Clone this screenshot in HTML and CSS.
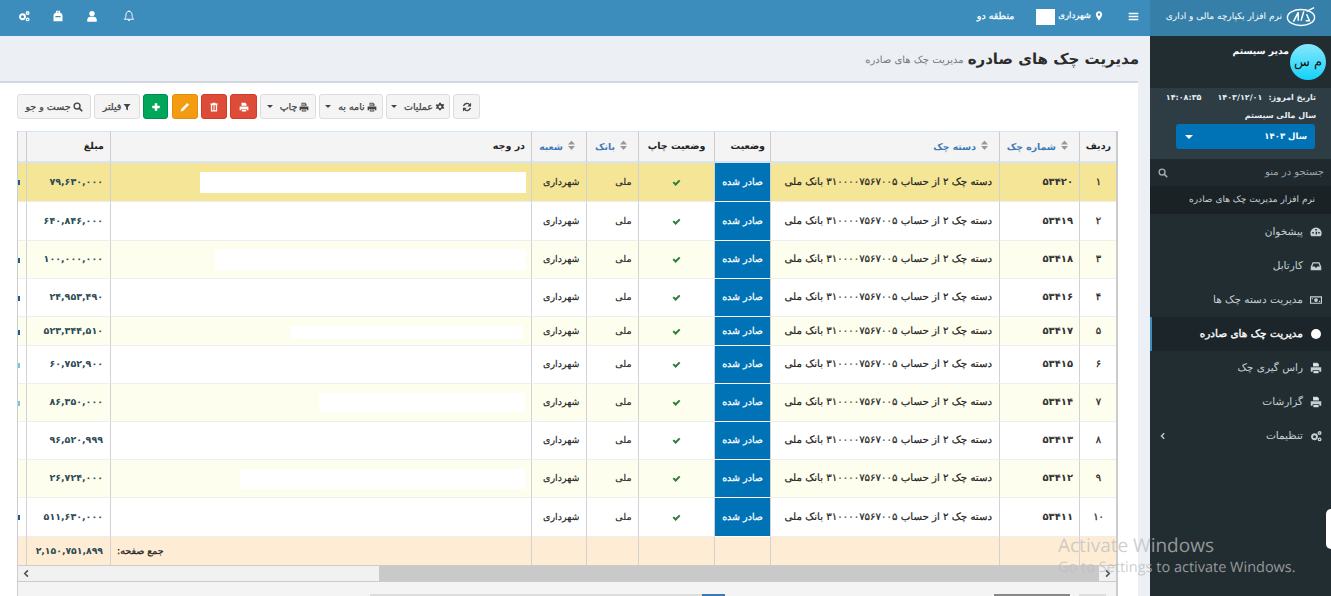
FILE: index.html
```html
<!DOCTYPE html>
<html lang="fa" dir="rtl">
<head>
<meta charset="utf-8">
<title>مدیریت چک های صادره</title>
<link rel="stylesheet" href="styles.css">
</head>
<body>
<svg class="defs" width="0" height="0" aria-hidden="true">
  <symbol id="i-print" viewBox="0 0 16 16"><path d="M4 1h6l2 2v3H4z M1 7h14v6h-2.500v-2h-9v2H1z M4.500 12h7v3h-7z" fill="currentColor"/><path d="M5 2.500h5V5H5z M5.500 12.800h5v1.300h-5z" fill="#fff" opacity=".55"/></symbol>
  <symbol id="i-gear" viewBox="0 0 16 16"><path fill="currentColor" fill-rule="evenodd" d="M6.500 1h3l.4 2 1.500.7 1.800-1 1.600 2.200-1.500 1.400v1.400l1.500 1.400-1.600 2.200-1.800-1-1.500.7-.4 2h-3l-.4-2-1.500-.7-1.800 1L1.200 9.700 2.700 8.300V6.900L1.200 5.500l1.600-2.200 1.800 1 1.500-.7zM8 5.400a2.200 2.200 0 1 0 0 4.400 2.200 2.200 0 0 0 0-4.400z"/></symbol>
  <symbol id="i-refresh" viewBox="0 0 16 16"><path fill="none" stroke="currentColor" stroke-width="2.200" d="M2.500 6.500A5.700 5.700 0 0 1 12.500 4.500M13.500 9.500A5.700 5.700 0 0 1 3.500 11.500"/><path fill="currentColor" d="M14.500 1v6h-6zM1.500 15V9h6z"/></symbol>
  <symbol id="i-filter" viewBox="0 0 16 16"><path fill="currentColor" d="M1 2h14L9.800 8v7l-3.600-2.500V8z"/></symbol>
  <symbol id="i-search" viewBox="0 0 16 16"><circle cx="6.500" cy="6.500" r="4.700" fill="none" stroke="currentColor" stroke-width="2.200"/><path stroke="currentColor" stroke-width="2.800" stroke-linecap="round" d="M10.300 10.300 14 14"/></symbol>
  <symbol id="i-plus" viewBox="0 0 16 16"><path fill="currentColor" d="M6 2h4v4h4v4h-4v4H6v-4H2V6h4z"/></symbol>
  <symbol id="i-pencil" viewBox="0 0 16 16"><path fill="currentColor" d="M11.500 1.500 14.500 4.500 5 14l-4 1 1-4z"/></symbol>
  <symbol id="i-trash" viewBox="0 0 16 16"><path fill="currentColor" fill-rule="evenodd" d="M6 1h4l.7 1.500H14V4h-1v11H3V4H2V2.500h3.300zM5 5v8h1.500V5zM7.300 5v8h1.400V5zM9.500 5v8H11V5z"/></symbol>
  <symbol id="i-bell" viewBox="0 0 16 16"><path fill="none" stroke="currentColor" stroke-width="1.300" d="M8 1.800c-2.600 0-4 2-4 4.500 0 3-.7 4.500-2.200 6h12.400c-1.500-1.500-2.200-3-2.200-6 0-2.500-1.400-4.500-4-4.500z"/><path fill="currentColor" d="M6.500 13.300h3a1.500 1.500 0 0 1-3 0zM7.200.500h1.600v1.500H7.200z"/></symbol>
  <symbol id="i-user" viewBox="0 0 16 16"><circle cx="8" cy="4.800" r="3.600" fill="currentColor"/><path fill="currentColor" d="M1.500 14.500c0-4 2-5.600 4-5.600h5c2 0 4 1.600 4 5.600 0 .7-.5 1-1 1H2.500c-.5 0-1-.3-1-1z"/></symbol>
  <symbol id="i-bag" viewBox="0 0 16 16"><path fill="currentColor" fill-rule="evenodd" d="M5.500 1h5l.5 2.500c1.800.6 3 2 3 4V15H2V7.500c0-2 1.200-3.400 3-4zM6.800 2.300v1h2.400v-1zM4.500 8v1.800h7V8z"/></symbol>
  <symbol id="i-cogs" viewBox="0 0 16 16"><g fill="none" stroke="currentColor"><circle cx="6" cy="9" r="3.300" stroke-width="2.600"/><circle cx="12.800" cy="4" r="1.700" stroke-width="1.800"/><circle cx="12.800" cy="12.500" r="1.700" stroke-width="1.800"/></g></symbol>
  <symbol id="i-marker" viewBox="0 0 16 16"><path fill="currentColor" fill-rule="evenodd" d="M8 0.500c3 0 5 2.200 5 5 0 3-3 6.500-5 10-2-3.500-5-7-5-10 0-2.800 2-5 5-5zM8 3.500a2 2 0 1 0 0 4 2 2 0 0 0 0-4z"/></symbol>
  <symbol id="i-bars" viewBox="0 0 16 16"><path fill="currentColor" d="M1 2.500h14v2.200H1zM1 6.900h14v2.200H1zM1 11.300h14v2.200H1z"/></symbol>
  <symbol id="i-check" viewBox="0 0 16 16"><path fill="currentColor" d="M1 8.500 3.500 6l3 3L12.500 3 15 5.500 6.500 14z"/></symbol>
  <symbol id="i-dash" viewBox="0 0 16 16"><path fill="currentColor" fill-rule="evenodd" d="M8 2a7.500 7.500 0 0 1 7.500 7.500c0 1.700-.5 3.100-1.300 4.300H1.800C1 12.600.500 11.200.500 9.500A7.500 7.500 0 0 1 8 2zM7 4v2h2V4zM3 8v2h2V8zM11 8v2h2V8zM7.500 7.500v3.700h1.500l.8-3.700z"/></symbol>
  <symbol id="i-inbox" viewBox="0 0 16 16"><path fill="currentColor" fill-rule="evenodd" d="M3.500 3h9L15 9v4.500H1V9zM4.500 4.500 3 8.800h3.500l.8 1.500h1.400l.8-1.500H13l-1.500-4.300z"/></symbol>
  <symbol id="i-money" viewBox="0 0 16 16"><path fill="currentColor" fill-rule="evenodd" d="M0 3h16v10H0zM1.500 4.500v7h13v-7z"/><circle cx="8" cy="8" r="2.500" fill="currentColor"/><path fill="currentColor" d="M2.500 5.500H4v1.500H2.500zM12 9h1.500v1.500H12z"/></symbol>
  <symbol id="i-left" viewBox="0 0 16 16"><path fill="none" stroke="currentColor" stroke-width="3" d="M10.500 2.500 5 8l5.500 5.500"/></symbol>
  <symbol id="i-right" viewBox="0 0 16 16"><path fill="none" stroke="currentColor" stroke-width="3" d="M5.500 2.500 11 8l-5.500 5.500"/></symbol>
</svg>

<aside class="sidebar">
  <div class="logo">
    <svg class="logo-mark" viewBox="0 0 32 22" aria-hidden="true"><ellipse cx="16" cy="11.500" rx="14.500" ry="8.500" fill="none" stroke="#fff" stroke-width="1.500"/><path d="M8 16 13 6v9M16 15l3-10M21 15h4l-3-7M22 5l8-4" fill="none" stroke="#fff" stroke-width="1.600"/></svg>
    <span class="logo-text">نرم افزار یکپارچه مالی و اداری</span>
  </div>
  <div class="user-panel">
    <div class="avatar">م س</div>
    <div class="user-name">مدیر سیستم</div>
  </div>
  <div class="date-panel">
    <div class="date-row"><span>تاریخ امروز:</span><span class="date-val">۱۴۰۳/۱۲/۰۱</span><span class="time-val">۱۴:۰۸:۳۵</span></div>
    <div class="fiscal">سال مالی سیستم</div>
    <div class="year-select"><span>سال ۱۴۰۳</span><i class="caret caret-white"></i></div>
  </div>
  <div class="side-search">
    <span>جستجو در منو</span>
    <svg class="ico ico-11"><use href="#i-search"/></svg>
  </div>
  <div class="side-title">نرم افزار مدیریت چک های صادره</div>
  <nav class="menu">
    <a class="menu-item"><svg class="ico ico-12"><use href="#i-dash"/></svg><span>پیشخوان</span></a>
    <a class="menu-item"><svg class="ico ico-12"><use href="#i-inbox"/></svg><span>کارتابل</span></a>
    <a class="menu-item"><svg class="ico ico-12"><use href="#i-money"/></svg><span>مدیریت دسته چک ها</span></a>
    <a class="menu-item active"><i class="dot"></i><span>مدیریت چک های صادره</span></a>
    <a class="menu-item"><svg class="ico ico-12"><use href="#i-print"/></svg><span>راس گیری چک</span></a>
    <a class="menu-item"><svg class="ico ico-12"><use href="#i-print"/></svg><span>گزارشات</span></a>
    <a class="menu-item"><svg class="ico ico-12"><use href="#i-cogs"/></svg><span>تنظیمات</span><svg class="chev"><use href="#i-left"/></svg></a>
  </nav>
</aside>

<main class="main">
  <header class="topbar">
    <div class="top-right">
      <svg class="ico ico-11"><use href="#i-bars"/></svg>
      <div class="top-city"><svg class="ico ico-10"><use href="#i-marker"/></svg><span>شهرداری</span><i class="top-mask"></i><span class="top-region">منطقه دو</span></div>
    </div>
    <div class="top-left">
      <svg class="ico ico-12 top-bell"><use href="#i-bell"/></svg>
      <svg class="ico ico-12"><use href="#i-user"/></svg>
      <svg class="ico ico-12"><use href="#i-bag"/></svg>
      <svg class="ico ico-12"><use href="#i-cogs"/></svg>
    </div>
  </header>

  <section class="page-head">
    <h1>مدیریت چک های صادره</h1>
    <small>مدیریت چک های صادره</small>
  </section>

  <section class="box">
    <div class="toolbar">
      <button class="btn btn-refresh"><svg class="ico ico-10"><use href="#i-refresh"/></svg></button>
      <button class="btn btn-ops"><svg class="ico ico-10"><use href="#i-gear"/></svg>عملیات<i class="caret"></i></button>
      <button class="btn btn-letter"><svg class="ico ico-10"><use href="#i-print"/></svg>نامه به<i class="caret"></i></button>
      <button class="btn btn-print"><svg class="ico ico-10"><use href="#i-print"/></svg>چاپ<i class="caret"></i></button>
      <button class="btn btn-red btn-w27"><svg class="ico ico-10"><use href="#i-print"/></svg></button>
      <button class="btn btn-red btn-w26"><svg class="ico ico-10"><use href="#i-trash"/></svg></button>
      <button class="btn btn-orange btn-w26"><svg class="ico ico-10"><use href="#i-pencil"/></svg></button>
      <button class="btn btn-green btn-w25"><svg class="ico ico-10"><use href="#i-plus"/></svg></button>
      <button class="btn btn-filter"><svg class="ico ico-8"><use href="#i-filter"/></svg>فیلتر</button>
      <button class="btn btn-find"><svg class="ico ico-10"><use href="#i-search"/></svg>جست و جو</button>
    </div>

    <div class="grid">
      <table class="data">
        <colgroup>
          <col class="c-1"><col class="c-2"><col class="c-3"><col class="c-4"><col class="c-5"><col class="c-6"><col class="c-7"><col class="c-8"><col class="c-9"><col class="c-10">
        </colgroup>
        <thead>
          <tr>
            <th>ردیف</th>
            <th class="sort"><i class="sorter"></i>شماره چک</th>
            <th class="sort"><i class="sorter"></i>دسته چک</th>
            <th class="th-status">وضعیت</th>
            <th>وضعیت چاپ</th>
            <th class="sort"><i class="sorter"></i>بانک</th>
            <th class="sort"><i class="sorter"></i>شعبه</th>
            <th class="th-start">در وجه</th>
            <th class="th-start">مبلغ</th>
            <th></th>
          </tr>
        </thead>
        <tbody>
          <tr class="sel h39"><td class="center idx">۱</td><td class="num">۵۳۴۲۰</td><td class="desc">دسته چک ۲ از حساب ۳۱۰۰۰۰۷۵۶۷۰۰۵ بانک ملی</td><td class="status">صادر شده</td><td class="center"><svg class="ico ico-9 ok"><use href="#i-check"/></svg></td><td class="text">ملی</td><td class="text">شهرداری</td><td><i class="mask mask-a"></i></td><td class="amount">۷۹,۶۳۰,۰۰۰</td><td class="clip"><i class="tick"></i></td></tr>
          <tr class="h39"><td class="center idx">۲</td><td class="num">۵۳۴۱۹</td><td class="desc">دسته چک ۲ از حساب ۳۱۰۰۰۰۷۵۶۷۰۰۵ بانک ملی</td><td class="status">صادر شده</td><td class="center"><svg class="ico ico-9 ok"><use href="#i-check"/></svg></td><td class="text">ملی</td><td class="text">شهرداری</td><td></td><td class="amount">۶۴۰,۸۴۶,۰۰۰</td><td class="clip"></td></tr>
          <tr class="alt h38"><td class="center idx">۳</td><td class="num">۵۳۴۱۸</td><td class="desc">دسته چک ۲ از حساب ۳۱۰۰۰۰۷۵۶۷۰۰۵ بانک ملی</td><td class="status">صادر شده</td><td class="center"><svg class="ico ico-9 ok"><use href="#i-check"/></svg></td><td class="text">ملی</td><td class="text">شهرداری</td><td><i class="mask mask-b"></i></td><td class="amount">۱۰۰,۰۰۰,۰۰۰</td><td class="clip"><i class="tick"></i></td></tr>
          <tr class="h38"><td class="center idx">۴</td><td class="num">۵۳۴۱۶</td><td class="desc">دسته چک ۲ از حساب ۳۱۰۰۰۰۷۵۶۷۰۰۵ بانک ملی</td><td class="status">صادر شده</td><td class="center"><svg class="ico ico-9 ok"><use href="#i-check"/></svg></td><td class="text">ملی</td><td class="text">شهرداری</td><td></td><td class="amount">۲۴,۹۵۳,۴۹۰</td><td class="clip"><i class="tick"></i></td></tr>
          <tr class="alt h29"><td class="center idx">۵</td><td class="num">۵۳۴۱۷</td><td class="desc">دسته چک ۲ از حساب ۳۱۰۰۰۰۷۵۶۷۰۰۵ بانک ملی</td><td class="status">صادر شده</td><td class="center"><svg class="ico ico-9 ok"><use href="#i-check"/></svg></td><td class="text">ملی</td><td class="text">شهرداری</td><td><i class="mask mask-c"></i></td><td class="amount">۵۲۳,۳۴۴,۵۱۰</td><td class="clip"><i class="tick"></i></td></tr>
          <tr class="h38"><td class="center idx">۶</td><td class="num">۵۳۴۱۵</td><td class="desc">دسته چک ۲ از حساب ۳۱۰۰۰۰۷۵۶۷۰۰۵ بانک ملی</td><td class="status">صادر شده</td><td class="center"><svg class="ico ico-9 ok"><use href="#i-check"/></svg></td><td class="text">ملی</td><td class="text">شهرداری</td><td></td><td class="amount">۶۰,۷۵۲,۹۰۰</td><td class="clip"><i class="tick tick-l"></i></td></tr>
          <tr class="alt h38"><td class="center idx">۷</td><td class="num">۵۳۴۱۴</td><td class="desc">دسته چک ۲ از حساب ۳۱۰۰۰۰۷۵۶۷۰۰۵ بانک ملی</td><td class="status">صادر شده</td><td class="center"><svg class="ico ico-9 ok"><use href="#i-check"/></svg></td><td class="text">ملی</td><td class="text">شهرداری</td><td><i class="mask mask-d"></i></td><td class="amount">۸۶,۳۵۰,۰۰۰</td><td class="clip"><i class="tick tick-l"></i></td></tr>
          <tr class="h38"><td class="center idx">۸</td><td class="num">۵۳۴۱۳</td><td class="desc">دسته چک ۲ از حساب ۳۱۰۰۰۰۷۵۶۷۰۰۵ بانک ملی</td><td class="status">صادر شده</td><td class="center"><svg class="ico ico-9 ok"><use href="#i-check"/></svg></td><td class="text">ملی</td><td class="text">شهرداری</td><td></td><td class="amount">۹۶,۵۲۰,۹۹۹</td><td class="clip"></td></tr>
          <tr class="alt h38"><td class="center idx">۹</td><td class="num">۵۳۴۱۲</td><td class="desc">دسته چک ۲ از حساب ۳۱۰۰۰۰۷۵۶۷۰۰۵ بانک ملی</td><td class="status">صادر شده</td><td class="center"><svg class="ico ico-9 ok"><use href="#i-check"/></svg></td><td class="text">ملی</td><td class="text">شهرداری</td><td><i class="mask mask-e"></i></td><td class="amount">۲۶,۷۲۴,۰۰۰</td><td class="clip"></td></tr>
          <tr class="h39"><td class="center idx">۱۰</td><td class="num">۵۳۴۱۱</td><td class="desc">دسته چک ۲ از حساب ۳۱۰۰۰۰۷۵۶۷۰۰۵ بانک ملی</td><td class="status">صادر شده</td><td class="center"><svg class="ico ico-9 ok"><use href="#i-check"/></svg></td><td class="text">ملی</td><td class="text">شهرداری</td><td></td><td class="amount">۵۱۱,۶۳۰,۰۰۰</td><td class="clip"><i class="tick"></i></td></tr>
        </tbody>
        <tfoot>
          <tr><td></td><td></td><td></td><td></td><td></td><td></td><td></td><td class="sum-label">جمع صفحه:</td><td class="amount sum">۲,۱۵۰,۷۵۱,۸۹۹</td><td></td></tr>
        </tfoot>
      </table>
      <div class="hscroll">
        <span class="sb-btn sb-right"><svg class="ico ico-9"><use href="#i-right"/></svg></span>
        <span class="sb-thumb"></span>
        <span class="sb-track"></span>
        <span class="sb-btn sb-left"><svg class="ico ico-9"><use href="#i-left"/></svg></span>
      </div>
      <div class="pager">
        <i class="pg pg-a"></i><i class="pg pg-b"></i><i class="pg pg-c"></i><i class="pg pg-d"></i>
      </div>
    </div>
  </section>
</main>

<i class="edge-tab"></i>
<div class="activate" dir="ltr">
  <div class="activate-1">Activate Windows</div>
  <div class="activate-2">Go to Settings to activate Windows.</div>
</div>
</body>
</html>
```

FILE: styles.css
```css
* { box-sizing: border-box; }
html, body { height: 100%; }
body {
  margin: 0;
  width: 1331px;
  height: 596px;
  overflow: hidden;
  display: flex;
  position: relative;
  background: #ecf0f5;
  font-family: "DejaVu Sans", "Noto Sans", sans-serif;
  font-size: 10px;
  color: #222;
  text-rendering: geometricPrecision;
}
.defs { position: absolute; }
.ico { display: block; flex: none; }
.ico-8 { width: 8px; height: 8px; }
.ico-9 { width: 9px; height: 9px; }
.ico-10 { width: 10px; height: 10px; }
.ico-11 { width: 11px; height: 11px; }
.ico-12 { width: 12px; height: 12px; }

/* sidebar */
.sidebar { width: 181px; flex: none; height: 596px; background: #222d32; color: #fff; }
.logo {
  height: 36px; background: #367fa9;
  display: flex; align-items: center; gap: 4px; padding: 0 15px 3px 0;
  font-size: 9px; white-space: nowrap;
}
.logo-mark { width: 30px; height: 22px; flex: none; }
.user-panel { height: 52px; display: flex; padding: 8px 5px 0 0; gap: 1px; }
.avatar {
  width: 36px; height: 36px; border-radius: 50%;
  background: linear-gradient(#86e8fb, #14d2fb);
  color: #111; font-size: 13px; text-align: center; line-height: 38px;
}
.user-name { font-size: 9.200px; font-weight: 700; line-height: 16px; }
.date-panel { height: 71px; background: #2e3c43; padding: 3px 15px 0 16px; font-size: 8px; font-weight: 700; color: #e4edf5; }
.date-row { display: flex; gap: 6px; height: 15px; line-height: 13px; white-space: nowrap; }
.date-val, .time-val { letter-spacing: -.5px; }
.time-val { margin-right: 10px; }
.fiscal { height: 18px; line-height: 19px; }
.year-select {
  height: 25px; width: 139px; margin: 0 1px 0 0; background: #0073b7; border-radius: 3px;
  display: flex; align-items: center; justify-content: space-between; padding: 0 8px 0 9px;
  color: #fff; font-size: 8.500px;
}
.caret { display: inline-block; width: 0; height: 0; border: 3px solid transparent; border-top: 3.500px solid #444; border-bottom: 0; margin-right: 5px; }
.caret-white { border-top-color: #fff; border-left-width: 4px; border-right-width: 4px; border-top-width: 4px; }
.side-search {
  height: 27px; background: #1f292e; color: #9aa7ad; display: flex; align-items: center;
  justify-content: space-between; padding: 0 7px 0 8px; font-size: 10px;
}
.side-search .ico { color: #a0aeb5; width: 10px; height: 10px; }
.side-title { height: 28px; background: #1a2226; color: #c6d3d9; font-size: 9px; line-height: 28px; padding-right: 16px; white-space: nowrap; }
.menu { padding-top: 1px; }
.menu-item {
  display: flex; align-items: center; gap: 7px; height: 34px; padding-right: 9px;
  color: #c4d0d6; font-size: 10.500px; position: relative; white-space: nowrap;
  border-left: 2px solid transparent;
}
.menu-item.active { background: #1c2529; color: #fff; border-left-color: #3c8dbc; -webkit-text-stroke: .35px #fff; }
.dot { width: 10px; height: 10px; border-radius: 50%; background: #fff; margin: 0 1px; flex: none; }
.chev { position: absolute; left: 7px; top: 13px; width: 8px; height: 8px; color: #b8c7ce; }

/* main */
.main { width: 1150px; flex: none; height: 596px; display: flex; flex-direction: column; }
.topbar {
  height: 36px; flex: none; background: #3c8dbc; color: #fff;
  display: flex; justify-content: space-between; align-items: center; padding: 0 11px 4px 18px;
}
.top-right { display: flex; align-items: center; gap: 24px; }
.top-city { display: flex; align-items: center; gap: 3px; font-size: 8.500px; -webkit-text-stroke: .25px #fff; }
.top-mask { width: 19px; height: 16px; background: #fff; display: block; margin: 2px 0 0; }
.top-region { margin-right: 19px; font-size: 9.500px; }
.top-left { display: flex; align-items: center; gap: 22px; }
.top-bell { margin-left: 3px; }
.page-head {
  height: 45px; flex: none; display: flex; align-items: center; gap: 4px; padding: 0 11px 0 0;
}
.page-head h1 { margin: 0; font-size: 15px; font-weight: 700; color: #2c2c2c; white-space: nowrap; }
.page-head small { font-size: 10px; color: #777; white-space: nowrap; margin-top: 3px; }

.box { width: 1138px; margin-right: 12px; flex: 1; background: #fff; border-top: 2px solid #d2d6de; padding: 11px 20px 0 0; overflow: hidden; }

/* toolbar */
.toolbar { display: flex; gap: 3px; height: 25px; justify-content: flex-end; margin-left: 17px; }
.btn {
  height: 25px; border: 1px solid #ddd; border-radius: 3px; background: #f4f4f4; color: #444;
  display: flex; align-items: center; justify-content: center; gap: 2px;
  font: 400 9.500px "DejaVu Sans", sans-serif; -webkit-text-stroke: .25px #444; padding: 0; white-space: nowrap; flex: none;
}
.btn-refresh { width: 27px; }
.btn-ops { width: 64px; }
.btn-letter { width: 64px; }
.btn-print { width: 56px; }
.btn-filter { width: 46px; }
.btn-find { width: 74px; }
.btn-w27 { width: 27px; }
.btn-w26 { width: 26px; }
.btn-w25 { width: 25px; margin-right: 1px; }
.btn-red { background: #dd4b39; border-color: #d73925; color: #fff; }
.btn-orange { background: #f39c12; border-color: #e08e0b; color: #fff; }
.btn-green { background: #00a65a; border-color: #008d4c; color: #fff; }

/* grid */
.grid { margin-top: 12px; width: 1101px; height: 470px; background: #f4f4f4; border-left: 1px solid #ccc; overflow: hidden; border-right: 2px solid #ccc; }
.data { width: 1100px; table-layout: fixed; border-collapse: separate; border-spacing: 0; margin-right: -1px; }
.c-1 { width: 38px; } .c-2 { width: 80px; } .c-3 { width: 229px; } .c-4 { width: 56px; } .c-5 { width: 76px; }
.c-6 { width: 52px; } .c-7 { width: 55px; } .c-8 { width: 421px; } .c-9 { width: 84px; } .c-10 { width: 9px; }
.data th {
  height: 32px; background: #f4f4f4; font-size: 9.500px; font-weight: 700; color: #222;
  border-top: 1px solid #d6e4f5; border-bottom: 2px solid #d6e4f5; border-left: 1px solid #ccc;
  padding: 0 6px; white-space: nowrap; text-align: center;
}
.data th.sort { color: #3f7ab8; text-align: right; padding: 0 11px 0 0; font-size: 9.300px; }
.data th.th-start { text-align: right; }
.data th.th-status { text-align: right; padding-right: 5px; }
.sorter {
  display: inline-block; width: 7px; height: 10px; margin-left: 5px; vertical-align: -1px;
  background: #999;
  clip-path: path("M3.500 0L7 4H0zM0 5.500h7L3.500 9.500z");
}
.data td {
  padding: 0; font-size: 9.500px; border-left: 1px solid #d2d2d2; border-bottom: 1px solid #eee;
  white-space: nowrap; overflow: hidden; background: #fff; color: #222;
}
.h39 { height: 39px; } .h38 { height: 38px; } .h29 { height: 29px; }
.alt td { background: #fefeee; }
.sel td { background: #f5e596; }
.data td.center { text-align: center; }
.data td.text { text-align: right; padding-right: 6.500px; -webkit-text-stroke: .15px #222; }
.data td.idx { -webkit-text-stroke: .3px #333; font-size: 10px; }
.data td.num { text-align: right; padding-right: 6px; font-size: 10px; color: #333; font-weight: 700; }
.data td.desc { text-align: right; padding-right: 7px; font-size: 10.200px; -webkit-text-stroke: .2px #222; }
.data td.status { background: #0073b7; color: #fff; text-align: center; font-size: 9.500px; -webkit-text-stroke: .25px #fff; border-bottom: 1px solid #fff; }
.data td.amount { text-align: right; padding-right: 7px; font-weight: 700; color: #2c4a55; font-size: 9.500px; }
.data td.sum { font-size: 9.300px; }
.ok { color: #2f7d3e; margin: 0 auto; }
.mask { display: block; background: #fff; margin-right: 5px; }
.mask-a { width: 326px; height: 21px; }
.mask-b { width: 311px; height: 21px; }
.mask-c { width: 233px; height: 13px; margin-top: 3px; margin-right: 8px; }
.mask-d { width: 206px; height: 19px; margin-right: 6px; }
.mask-e { width: 286px; height: 20px; }
.clip { position: relative; border-left: 0 !important; }
.tick { position: absolute; left: 1px; top: 45%; width: 2px; height: 5px; background: #1e5b8e; }
.tick-l { background: #7cc3ea; }
.data tfoot td { height: 28px; background: #feedd4; border-bottom: 0; }
.data td.sum-label { text-align: left; padding-left: 6px; font-size: 9.500px; -webkit-text-stroke: .25px #222; }
.hscroll { height: 17px; display: flex; background: #f1f1f1; border-top: 1px solid #ccc; border-bottom: 1px solid #ccc; }
.sb-btn { width: 17px; flex: none; display: flex; align-items: center; justify-content: center; color: #555; background: #f1f1f1; }
.sb-thumb { width: 720px; flex: none; background: #c9c9c9; }
.sb-track { flex: 1; }
.pager { height: 14px; display: flex; padding-top: 12px; direction: ltr; }
.pg { display: block; height: 2px; flex: none; }
.pg-a { width: 332px; margin-left: 352px; background: #ddd; }
.pg-b { width: 23px; background: #3c78b4; }
.pg-c { width: 76px; margin-left: 269px; background: #888; }
.pg-d { width: 27px; margin-left: 9px; background: #ddd; }

/* overlays */
.edge-tab { position: absolute; left: 1326px; top: 509px; width: 5px; height: 40px; background: #fff; border-radius: 5px 0 0 5px; }
.activate { position: absolute; left: 1058px; top: 534px; color: rgba(190, 190, 190, .75); font-family: "Open Sans", sans-serif; pointer-events: none; white-space: nowrap; }
.activate-1 { font-size: 19px; line-height: 23px; }
.activate-2 { font-size: 14.500px; line-height: 21px; }
```
